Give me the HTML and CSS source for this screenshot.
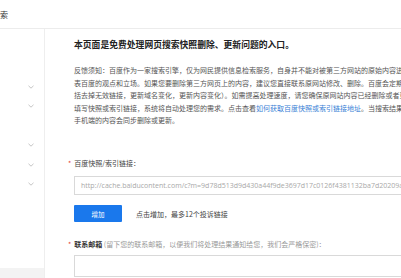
FILE: index.html
```html
<!DOCTYPE html>
<html lang="zh-CN">
<head>
<meta charset="utf-8">
<title>快照删除与更新</title>
<link rel="stylesheet" href="styles.css">
</head>
<body>
<div class="header"><span class="header-title">网页搜索</span></div>
<div class="layout">
  <aside class="sidebar">
    <ul class="menu">
      <li class="menu-item"><svg class="chev" viewBox="0 0 6 4"><path d="M0.5 0.8 L3 3.2 L5.5 0.8"/></svg></li>
      <li class="menu-item"><svg class="chev" viewBox="0 0 6 4"><path d="M0.5 0.8 L3 3.2 L5.5 0.8"/></svg></li>
      <li class="menu-item"></li>
      <li class="menu-item"><svg class="chev" viewBox="0 0 6 4"><path d="M0.5 0.8 L3 3.2 L5.5 0.8"/></svg></li>
      <li class="menu-item"><svg class="chev" viewBox="0 0 6 4"><path d="M0.5 0.8 L3 3.2 L5.5 0.8"/></svg></li>
      <li class="menu-item"><svg class="chev" viewBox="0 0 6 4"><path d="M0.5 0.8 L3 3.2 L5.5 0.8"/></svg></li>
    </ul>
    <div class="sidebar-foot"></div>
  </aside>
  <main class="main">
    <h1 class="title">本页面是免费处理网页搜索快照删除、更新问题的入口。</h1>
    <p class="notice">
      <span class="line">反馈须知：百度作为一家搜索引擎，仅为网民提供信息检索服务，自身并不能对被第三方网站的原始内容进行修改，相关内容不代</span>
      <span class="line">表百度的观点和立场。如果您要删除第三方网页上的内容，建议您直接联系原网站修改、删除。百度会定期自动更新快照（包</span>
      <span class="line">括去掉无效链接，更新域名变化，更新内容变化）。如需提高处理速度，请您确保原网站内容已经删除或者更新后，在下方</span>
      <span class="line">填写快照或索引链接，系统将自动处理您的需求。点击查看<a class="link" href="#">如何获取百度快照或索引链接地址</a>。当搜索结果的PC端内容删除或更新后，</span>
      <span class="line">手机端的内容会同步删除或更新。</span>
    </p>
    <div class="field">
      <label class="label"><span class="req">*</span>百度快照/索引链接：</label>
      <div class="input"><span class="placeholder">http://cache.baiducontent.com/c?m=9d78d513d9d430a44f9de3697d17c0126f4381132ba7d20209a4c6d8</span></div>
    </div>
    <div class="actions">
      <button class="btn">增加</button>
      <span class="hint">点击增加，最多12个投诉链接</span>
    </div>
    <div class="field field-mail">
      <label class="label"><span class="req">*</span><b class="strong">联系邮箱</b> <span class="sub">(留下您的联系邮箱，以便我们将处理结果通知给您，我们会严格保密)：</span></label>
      <div class="input input-mail"></div>
    </div>
  </main>
</div>
</body>
</html>
```
FILE: styles.css
```css
html, body {
  margin: 0;
  padding: 0;
}
body {
  width: 401px;
  height: 278px;
  overflow: hidden;
  background: #fff;
  font-family: "Noto Sans CJK SC", "Noto Sans", "Liberation Sans", sans-serif;
  color: #333;
}
.header {
  height: 28px;
  border-bottom: 1px solid #ececec;
  display: flex;
  align-items: center;
  box-sizing: content-box;
}
.header-title {
  font-size: 8px;
  color: #333;
  margin-left: -24px;
  white-space: nowrap;
}
.layout {
  display: flex;
  height: 249px;
}
.sidebar {
  width: 44px;
  flex: none;
  border-right: 1px solid #eeeeee;
  display: flex;
  flex-direction: column;
}
.menu {
  list-style: none;
  margin: 0;
  padding: 48px 0 0;
}
.menu-item {
  height: 19.5px;
  display: flex;
  align-items: center;
  justify-content: flex-end;
  padding-right: 10px;
}
.chev {
  width: 6px;
  height: 4px;
  fill: none;
  stroke: #b5b5b5;
  stroke-width: 0.8;
}
.sidebar-foot {
  margin-top: auto;
  height: 10px;
  background: #f3f3f3;
}
.main {
  flex: 1;
  min-width: 0;
  padding: 10px 0 0 29px;
  white-space: nowrap;
}
.title {
  margin: 0;
  font-size: 8.8px;
  line-height: 12px;
  font-weight: 700;
  color: #222;
}
.notice {
  margin: 13px 0 0;
  font-size: 7px;
  line-height: 12.5px;
  color: #555;
}
.line {
  display: block;
}
.link {
  color: #3a7fd6;
  text-decoration: none;
}
.field {
  margin-top: 31.5px;
}
.label {
  display: block;
  font-size: 7px;
  line-height: 10px;
  color: #444;
  margin-left: -6px;
}
.req {
  color: #e53935;
  margin-right: 3px;
}
.input {
  margin-top: 8px;
  height: 19px;
  width: 420px;
  box-sizing: border-box;
  border: 1px solid #d9d9d9;
  display: flex;
  align-items: center;
  padding-left: 6px;
  overflow: hidden;
}
.placeholder {
  font-family: "Open Sans", "Noto Sans", sans-serif;
  font-size: 7px;
  color: #a8a8a8;
}
.actions {
  margin-top: 10px;
  display: flex;
  align-items: center;
}
.btn {
  width: 48px;
  height: 17px;
  border: none;
  border-radius: 1px;
  background: #1a78ec;
  color: #fff;
  font-family: "Noto Sans CJK SC", sans-serif;
  font-size: 6.5px;
  padding: 0;
}
.hint {
  margin-left: 14px;
  font-size: 7px;
  color: #444;
}
.field-mail {
  margin-top: 16.5px;
}
.strong {
  font-weight: 700;
  color: #333;
}
.sub {
  color: #999;
}
.input-mail {
  margin-top: 6px;
  height: 22px;
}
```
